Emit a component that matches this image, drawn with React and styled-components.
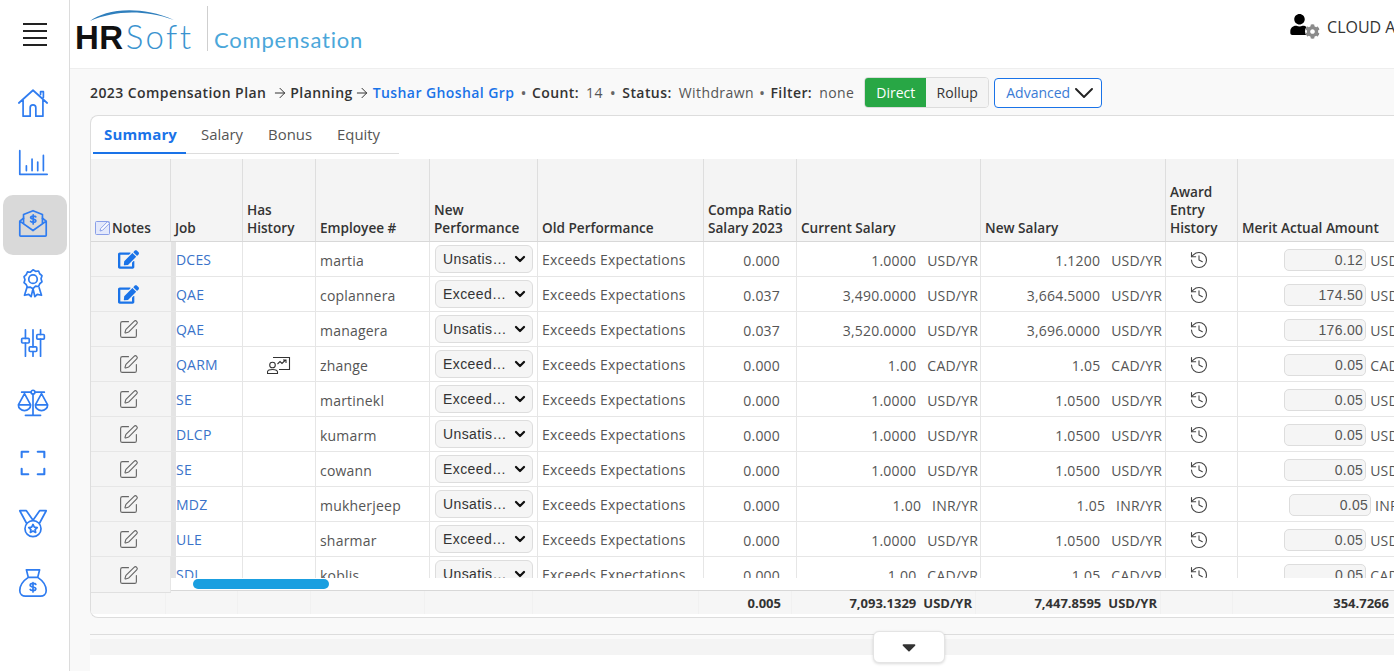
import React from 'react'
import styled, { createGlobalStyle } from 'styled-components'
import { FaEdit, FaUser, FaCog, FaCaretDown } from 'react-icons/fa'
import { History, SquarePen, ChevronDown, ArrowRight } from 'lucide-react'

const GlobalStyle = createGlobalStyle`
  html, body {
    margin: 0;
    height: 100%;
    overflow: hidden;
    background: #fff;
    font-family: "Open Sans", "Liberation Sans", sans-serif;
    font-size: 14px;
    color: #333;
  }
  * { box-sizing: border-box; }
`

const COLUMNS = '80px 72px 73px 114px 108px 166px 93px 184px 185px 72px 183px'

const Page = styled.div`
  display: flex;
  width: 1394px;
  height: 671px;
  overflow: hidden;
`
const Sidebar = styled.nav`
  width: 70px;
  flex: none;
  border-right: 1px solid #dcdcdc;
  padding-top: 23px;
`
const Burger = styled.button`
  display: flex;
  flex-direction: column;
  gap: 5px;
  width: 24px;
  margin: 0 0 0 23px;
  padding: 0;
  border: 0;
  background: none;
  span {
    height: 2px;
    background: #222;
  }
`
const NavList = styled.div`
  display: flex;
  flex-direction: column;
  margin-top: 29px;
`
const NavItem = styled.div`
  width: 64px;
  height: 60px;
  margin-left: 3px;
  padding: 0 4px 4px 0;
  display: flex;
  align-items: center;
  justify-content: center;
  border-radius: 10px;
  background: ${props => (props.$active ? '#d9d9d9' : 'transparent')};
  svg {
    width: 34px;
    height: 34px;
    fill: none;
    stroke: #2f7cf0;
    stroke-width: 1.8;
    stroke-linecap: round;
    stroke-linejoin: round;
  }
`
const Main = styled.div`
  flex: 1;
  min-width: 0;
  display: flex;
  flex-direction: column;
`
const Header = styled.header`
  height: 69px;
  flex: none;
  display: flex;
  justify-content: space-between;
  padding: 6px 0 0 5px;
  border-bottom: 1px solid #eeeeee;
`
const Logo = styled.div`
  display: flex;
  align-items: flex-start;
`
const LogoMark = styled.div`
  position: relative;
  width: 130px;
  height: 50px;
  padding-top: 14px;
  line-height: 32px;
  white-space: nowrap;
  svg {
    position: absolute;
    left: 15px;
    top: 0;
  }
`
const LogoHr = styled.span`
  font-family: "Liberation Sans", sans-serif;
  font-weight: 700;
  font-size: 33px;
  color: #111;
  letter-spacing: 0.5px;
`
const LogoSoft = styled.span`
  font-family: "Lato", sans-serif;
  font-weight: 300;
  font-size: 33px;
  color: #3a93cf;
  letter-spacing: 2.4px;
  margin-left: 2px;
`
const LogoProduct = styled.div`
  margin-left: 2px;
  border-left: 1px solid #cfcfcf;
  height: 45px;
  padding: 20px 0 0 6px;
  font-family: "Lato", sans-serif;
  font-size: 22px;
  line-height: 28px;
  color: #4ba7da;
  letter-spacing: 0.8px;
`
const UserBox = styled.div`
  display: flex;
  align-items: center;
  height: 30px;
  margin-top: 6px;
  margin-right: -44px;
  font-size: 16px;
  color: #333;
  white-space: nowrap;
`
const UserIcon = styled.div`
  position: relative;
  width: 33px;
  height: 26px;
  margin-right: 5px;
  color: #000;
`
const UserGear = styled(FaCog)`
  position: absolute;
  left: 16px;
  top: 10px;
  color: #8b8b8b;
  background: #fff;
  border-radius: 50%;
`
const Content = styled.div`
  flex: 1;
  min-height: 0;
  position: relative;
  background: #f9f9f9;
  padding: 8px 0 0 20px;
`
const Crumbs = styled.div`
  height: 31px;
  display: flex;
  align-items: center;
  white-space: nowrap;
  font-size: 14px;
  letter-spacing: 0.42px;
`
const Crumb = styled.b`
  font-weight: 600;
  color: ${props => (props.$link ? '#1a73e8' : '#333')};
`
const Arrow = styled(ArrowRight)`
  margin: 0 ${props => props.$after}px 0 ${props => props.$before}px;
  color: #333;
`
const Dot = styled.span`
  margin: 0 ${props => props.$after}px 0 ${props => props.$before}px;
  font-size: 16px;
  color: #666;
`
const Plain = styled.span`
  margin-left: 7px;
  color: #555;
`
const Toggle = styled.div`
  display: flex;
  height: 31px;
  margin-left: 10px;
  border: 1px solid #dcdcdc;
  border-radius: 4px;
  overflow: hidden;
  letter-spacing: 0;
`
const ToggleItem = styled.span`
  width: ${props => props.$width}px;
  display: flex;
  align-items: center;
  justify-content: center;
  background: ${props => (props.$on ? '#28a745' : '#f4f4f4')};
  color: ${props => (props.$on ? '#fff' : '#333')};
`
const AdvancedButton = styled.button`
  display: flex;
  align-items: center;
  gap: 5px;
  height: 30px;
  width: 108px;
  margin-left: 5px;
  padding: 0 0 0 11px;
  background: #fff;
  border: 1px solid #1a73e8;
  border-radius: 4px;
  color: #3a7bd5;
  font: inherit;
  letter-spacing: 0;
`
const Panel = styled.section`
  position: relative;
  height: 503px;
  margin-top: 7px;
  background: #fff;
  border: 1px solid #dddddd;
  border-right: 0;
  border-radius: 8px 0 0 8px;
  overflow: hidden;
`
const Tabs = styled.div`
  display: flex;
  width: 306px;
  height: 38px;
  margin-left: 2px;
  border-bottom: 1px solid #dddddd;
`
const Tab = styled.div`
  padding: 8px ${props => (props.$active ? 9 : 10)}px 0 11px;
  margin-right: 4px;
  height: 38px;
  font-size: ${props => (props.$active ? 15 : 14.9)}px;
  letter-spacing: ${props => (props.$active ? 0.15 : 0)}px;
  color: ${props => (props.$active ? '#1a73e8' : '#555')};
  font-weight: ${props => (props.$active ? 700 : 400)};
  border-bottom: ${props => (props.$active ? '2px solid #1a73e8' : '0')};
`
const TableClip = styled.div`
  height: 419px;
  margin-top: 5px;
  overflow: hidden;
`
const GridRow = styled.div`
  display: grid;
  grid-template-columns: ${COLUMNS};
  width: 1350px;
`
const HeadRow = styled(GridRow)`
  height: 83px;
  background: #f4f4f4;
  border-bottom: 1px solid #d8d8d8;
`
const HeadCell = styled.div`
  display: flex;
  align-items: flex-end;
  padding: 0 4px 4px;
  border-right: 1px solid #dedede;
  font-size: 13.6px;
  font-weight: 600;
  line-height: 18px;
  color: #333;
  white-space: nowrap;
`
const HeadText = styled.span`
  display: block;
`
const NoteIcon = styled.svg`
  width: 18px;
  height: 18px;
  flex: none;
  margin-left: -1px;
`
const BodyRow = styled(GridRow)`
  height: 35px;
  border-bottom: 1px solid #e6e6e6;
`
const Cell = styled.div`
  display: flex;
  align-items: center;
  justify-content: ${props => props.$justify || 'flex-start'};
  padding: ${props => (props.$up ? 0 : 2)}px ${props => (props.$pad === undefined ? 4 : props.$pad)}px 0 4px;
  border-right: 1px solid #e6e6e6;
  color: #555;
  white-space: nowrap;
  letter-spacing: 0.2px;
`
const NotesCell = styled(Cell)`
  justify-content: center;
  background: #f4f4f4;
  border-right: 5px solid #e4e4e4;
  margin-right: -5px;
  position: relative;
  padding: 1px 9px 0 4px;
  color: ${props => (props.$filled ? '#1a73e8' : '#666')};
`
const JobCell = styled(Cell)`
  padding-left: 5px;
  color: #3a73c9;
`
const SelectWrap = styled.div`
  position: relative;
  width: 98px;
  height: 28px;
  margin: -2px 0 0 1px;
  svg {
    position: absolute;
    right: 5px;
    top: 6px;
    color: #111;
    pointer-events: none;
  }
`
const Select = styled.select`
  appearance: none;
  width: 100%;
  height: 100%;
  padding: 0 24px 0 7px;
  border: 1px solid #dddddd;
  border-radius: 6px;
  background-color: #f5f5f5;
  font-family: "Liberation Sans", sans-serif;
  font-size: 14px;
  letter-spacing: 0.4px;
  color: #333;
  text-overflow: ellipsis;
`
const Unit = styled.span`
  margin-left: 11px;
  min-width: 0;
`
const Amount = styled.span`
  display: block;
  width: 82px;
  height: 22px;
  margin-top: -1px;
  line-height: 21px;
  padding-right: 2px;
  text-align: right;
  font-family: "Liberation Sans", sans-serif;
  letter-spacing: 0.3px;
  background: #f5f5f5;
  border: 1px solid #dddddd;
  border-radius: 5px;
`
const MeritCell = styled(Cell)`
  border-right: 0;
  padding-right: 0;
  span + span {
    margin-left: 4px;
  }
`
const PinnedNote = styled.div`
  position: absolute;
  left: 0;
  top: 441px;
  width: 80px;
  height: 36px;
  padding: 1px 8px 0 4px;
  display: flex;
  align-items: center;
  justify-content: center;
  background: #f4f4f4;
  border-bottom: 1px solid #e0e0e0;
  border-right: 1px solid #e6e6e6;
  color: #666;
`
const Scrollbar = styled.div`
  position: absolute;
  left: 102px;
  top: 463px;
  width: 136px;
  height: 10px;
  border-radius: 5px;
  background: #1a9fe0;
`
const StripGap = styled.div`
  height: 12px;
`
const FootRow = styled(GridRow)`
  height: 24px;
  margin-left: -5px;
  background: #f6f6f6;
  border-top: 1px solid #d8d8d8;
  font-size: 13px;
  font-weight: 700;
  color: #333;
`
const FootCell = styled.div`
  display: flex;
  align-items: center;
  justify-content: flex-end;
  padding-right: ${props => props.$pad || 0}px;
  border-right: 1px solid #f1f1f1;
  white-space: nowrap;
`
const FootUnit = styled.span`
  margin-left: 7px;
`
const Band = styled.div`
  height: 21px;
  margin-top: 16px;
  border-top: 1px solid #dddddd;
  border-bottom: 16px solid #f4f4f4;
  background: #fafafa;
`
const Bottom = styled.div`
  height: 16px;
  background: #fff;
`
const CollapseButton = styled.button`
  position: absolute;
  left: 803px;
  top: 562px;
  width: 72px;
  height: 32px;
  display: flex;
  align-items: center;
  justify-content: center;
  padding: 0;
  background: #fff;
  border: 1px solid #e4e4e4;
  border-radius: 6px;
  box-shadow: 0 1px 3px rgba(0, 0, 0, 0.15);
  color: #333;
`

const rows = [
  { job: 'DCES', emp: 'martia', perf: 'Unsatisfactory', cur: '1.0000', next: '1.1200', cy: 'USD', merit: '0.12', filled: true, ratio: '0.000' },
  { job: 'QAE', emp: 'coplannera', perf: 'Exceeds Expectations', cur: '3,490.0000', next: '3,664.5000', cy: 'USD', merit: '174.50', filled: true, ratio: '0.037' },
  { job: 'QAE', emp: 'managera', perf: 'Unsatisfactory', cur: '3,520.0000', next: '3,696.0000', cy: 'USD', merit: '176.00', ratio: '0.037' },
  { job: 'QARM', emp: 'zhange', perf: 'Exceeds Expectations', cur: '1.00', next: '1.05', cy: 'CAD', merit: '0.05', ratio: '0.000', history: true },
  { job: 'SE', emp: 'martinekl', perf: 'Exceeds Expectations', cur: '1.0000', next: '1.0500', cy: 'USD', merit: '0.05', ratio: '0.000' },
  { job: 'DLCP', emp: 'kumarm', perf: 'Unsatisfactory', cur: '1.0000', next: '1.0500', cy: 'USD', merit: '0.05', ratio: '0.000' },
  { job: 'SE', emp: 'cowann', perf: 'Exceeds Expectations', cur: '1.0000', next: '1.0500', cy: 'USD', merit: '0.05', ratio: '0.000' },
  { job: 'MDZ', emp: 'mukherjeep', perf: 'Unsatisfactory', cur: '1.00', next: '1.05', cy: 'INR', merit: '0.05', ratio: '0.000' },
  { job: 'ULE', emp: 'sharmar', perf: 'Exceeds Expectations', cur: '1.0000', next: '1.0500', cy: 'USD', merit: '0.05', ratio: '0.000' },
  { job: 'SDL', emp: 'koblis', perf: 'Unsatisfactory', cur: '1.00', next: '1.05', cy: 'CAD', merit: '0.05', ratio: '0.000' },
]

const navIcons = [
  <>
    <path d="M3 18 18 4.500 33 18M7.500 15V32h7.500v-9a3 3 0 0 1 6 0v9h7.500V15M26 9V6h3v6" />
  </>,
  <>
    <path d="M4 5v25h29M11 26v-5M17 26V14M23 26v-9M29 26V10" />
  </>,
  <>
    <path d="M4 16v15a1 1 0 0 0 1 1h26a1 1 0 0 0 1-1V16l-4-3M8 13l-4 3 14 10 14-10" />
    <path d="M8 18V9l10-4 10 4v9" />
    <path d="M21 11.500c-.5-1-5.500-1.500-5.500.8s5.500 1 5.500 3.400-5 1.500-5.500.5M18.200 9.500v9.500" />
  </>,
  <>
    <circle cx="18" cy="14" r="4.500" />
    <path d="M18 4l2.700 1.600 3.200-.3 1.200 2.900 2.400 2.100-1 3.200 1 3.200-2.400 2.100-1.200 2.900-3.200-.3L18 24l-2.700-1.600-3.200.3-1.200-2.900-2.400-2.100 1-3.200-1-3.200 2.400-2.100 1.200-2.900 3.200.3z" />
    <path d="M11.500 23 9 31l4.500-1 2.500 2.500 2-8.500M24.500 23l2.500 8-4.500-1-2.500 2.500-2-8.500" />
  </>,
  <>
    <path d="M10 4v9M10 18v14M18 4v18M18 27v5M26 4v5M26 14v18" />
    <rect x="6" y="13" width="8" height="5" rx="1" />
    <rect x="14" y="22" width="8" height="5" rx="1" />
    <rect x="22" y="9" width="8" height="5" rx="1" />
  </>,
  <>
    <circle cx="18" cy="6.500" r="2" />
    <path d="M6 6.500h10M20 6.500h10M18 8.500V31M10 31h16" />
    <path d="M9 8 2.500 20h13zM27 8l-6.500 12h13zM2.500 20a6.500 6 0 0 0 13 0M20.500 20a6.500 6 0 0 0 13 0" />
  </>,
  <>
    <path d="M6 12V6h7M23 6h7v6M6 24v6h7M23 30h7v-6" strokeWidth="2.200" />
  </>,
  <>
    <path d="M11 18 4 5h7l7 10 7-10h7l-7 13" />
    <circle cx="18" cy="24" r="8.500" />
    <path d="m18 19.500 1.400 2.900 3.100.4-2.300 2.100.6 3.100-2.800-1.500-2.800 1.500.6-3.100-2.300-2.100 3.100-.4z" />
  </>,
  <>
    <path d="M13 12 11 4h14l-2 8M13 12h10M13 12C7 16 4 21 4 26c0 4 3 6 6 6h16c3 0 6-2 6-6 0-5-3-10-9-14" />
    <path d="M21 19.500c-.5-1.200-6-1.800-6 .8s6 1.200 6 3.800-5.500 2-6 .7M18 17.500v10" />
  </>,
]

const HistoryPerson = () => (
  <svg width="24" height="20" viewBox="0 0 24 20" fill="none" stroke="#333" strokeWidth="1.100">
    <path d="M6 2.500h16.500v12H12" />
    <circle cx="5.500" cy="10" r="2.800" />
    <path d="M.5 18.500v-1.500c0-1.600 1.500-2.500 5-2.500s5 .9 5 2.500v1.500z" />
    <path d="m10.500 9 2.500-2.500 2 2 3.500-3.500M16 5H19V8" />
  </svg>
)

const Row = ({ row }) => (
  <BodyRow>
    <NotesCell $filled={row.filled}>
      {row.filled ? <FaEdit size={21} /> : <SquarePen size={21} strokeWidth={1.3} />}
    </NotesCell>
    <JobCell $up>{row.job}</JobCell>
    <Cell $justify="center" $pad={5}>{row.history && <HistoryPerson />}</Cell>
    <Cell>{row.emp}</Cell>
    <Cell>
      <SelectWrap>
        <Select defaultValue={row.perf}>
          <option>Unsatisfactory</option>
          <option>Exceeds Expectations</option>
        </Select>
        <ChevronDown size={16} strokeWidth={3.4} />
      </SelectWrap>
    </Cell>
    <Cell $up>Exceeds Expectations</Cell>
    <Cell $justify="flex-end" $pad={16}>{row.ratio}</Cell>
    <Cell $justify="flex-end" $pad={2}>
      {row.cur}
      <Unit>{row.cy}/YR</Unit>
    </Cell>
    <Cell $justify="flex-end" $pad={3}>
      {row.next}
      <Unit>{row.cy}/YR</Unit>
    </Cell>
    <Cell $justify="center" $pad={10}>
      <History size={20} strokeWidth={1.3} color="#444" />
    </Cell>
    <MeritCell $justify="flex-end">
      <Amount>{row.merit}</Amount>
      <span>{row.cy}/YR</span>
    </MeritCell>
  </BodyRow>
)

const App = () => {
  return (
    <Page>
      <GlobalStyle />
      <Sidebar>
        <Burger aria-label="Menu">
          <span />
          <span />
          <span />
          <span />
        </Burger>
        <NavList>
          {navIcons.map((icon, i) => (
            <NavItem key={i} $active={i === 2}>
              <svg viewBox="0 0 36 36">{icon}</svg>
            </NavItem>
          ))}
        </NavList>
      </Sidebar>
      <Main>
        <Header>
          <Logo>
            <LogoMark>
              <svg width="90" height="16" viewBox="0 0 90 16">
                <path d="M0 15C14 4 48-2 84 14 52 3 24 5 0 15z" fill="#2f7fbd" />
              </svg>
              <LogoHr>HR</LogoHr>
              <LogoSoft>Soft</LogoSoft>
            </LogoMark>
            <LogoProduct>Compensation</LogoProduct>
          </Logo>
          <UserBox>
            <UserIcon>
              <FaUser size={21} />
              <UserGear size={15} />
            </UserIcon>
            CLOUD ADMIN
          </UserBox>
        </Header>
        <Content>
          <Crumbs>
            <Crumb>2023 Compensation Plan</Crumb>
            <Arrow size={16} strokeWidth={1.5} $before={6} $after={2} />
            <Crumb>Planning</Crumb>
            <Arrow size={16} strokeWidth={1.5} $before={1} $after={3} />
            <Crumb $link>Tushar Ghoshal Grp</Crumb>
            <Dot $before={6} $after={5}>•</Dot>
            <Crumb>Count:</Crumb>
            <Plain>14</Plain>
            <Dot $before={7} $after={6}>•</Dot>
            <Crumb>Status:</Crumb>
            <Plain>Withdrawn</Plain>
            <Dot $before={5} $after={5}>•</Dot>
            <Crumb>Filter:</Crumb>
            <Plain>none</Plain>
            <Toggle>
              <ToggleItem $on $width={61}>Direct</ToggleItem>
              <ToggleItem $width={62}>Rollup</ToggleItem>
            </Toggle>
            <AdvancedButton>
              Advanced
              <svg width="18" height="10" viewBox="0 0 18 10" fill="none" stroke="#222" strokeWidth="1.900" strokeLinecap="round" strokeLinejoin="round">
                <path d="m1 1 8 8 8-8" />
              </svg>
            </AdvancedButton>
          </Crumbs>
          <Panel>
            <Tabs>
              <Tab $active>Summary</Tab>
              <Tab>Salary</Tab>
              <Tab>Bonus</Tab>
              <Tab>Equity</Tab>
            </Tabs>
            <TableClip>
              <HeadRow>
                <HeadCell>
                  <NoteIcon viewBox="0 0 18 18" fill="none" stroke="#8a9fe8" strokeWidth="1">
                    <rect x="1.500" y="2.500" width="14" height="13" rx="1" fill="#e4e9fb" />
                    <path d="m6 12 .7-2.500L13.500 2.700l1.800 1.800-6.800 6.800z" fill="#fff" />
                  </NoteIcon>
                  Notes
                </HeadCell>
                <HeadCell>Job</HeadCell>
                <HeadCell><HeadText>Has<br />History</HeadText></HeadCell>
                <HeadCell>Employee #</HeadCell>
                <HeadCell><HeadText>New<br />Performance</HeadText></HeadCell>
                <HeadCell>Old Performance</HeadCell>
                <HeadCell><HeadText>Compa Ratio<br />Salary 2023</HeadText></HeadCell>
                <HeadCell>Current Salary</HeadCell>
                <HeadCell>New Salary</HeadCell>
                <HeadCell><HeadText>Award<br />Entry<br />History</HeadText></HeadCell>
                <HeadCell>Merit Actual Amount</HeadCell>
              </HeadRow>
              {rows.map((row, i) => (
                <Row key={i} row={row} />
              ))}
            </TableClip>
            <PinnedNote>
              <SquarePen size={21} strokeWidth={1.3} />
            </PinnedNote>
            <Scrollbar />
            <StripGap />
            <FootRow>
              <FootCell />
              <FootCell />
              <FootCell />
              <FootCell />
              <FootCell />
              <FootCell />
              <FootCell $pad={10}>0.005</FootCell>
              <FootCell $pad={3}>
                7,093.1329<FootUnit>USD/YR</FootUnit>
              </FootCell>
              <FootCell $pad={3}>
                7,447.8595<FootUnit>USD/YR</FootUnit>
              </FootCell>
              <FootCell />
              <FootCell $pad={26}>354.7266</FootCell>
            </FootRow>
          </Panel>
          <Band />
          <Bottom />
          <CollapseButton aria-label="Collapse">
            <FaCaretDown size={22} />
          </CollapseButton>
        </Content>
      </Main>
    </Page>
  )
}

export default App
